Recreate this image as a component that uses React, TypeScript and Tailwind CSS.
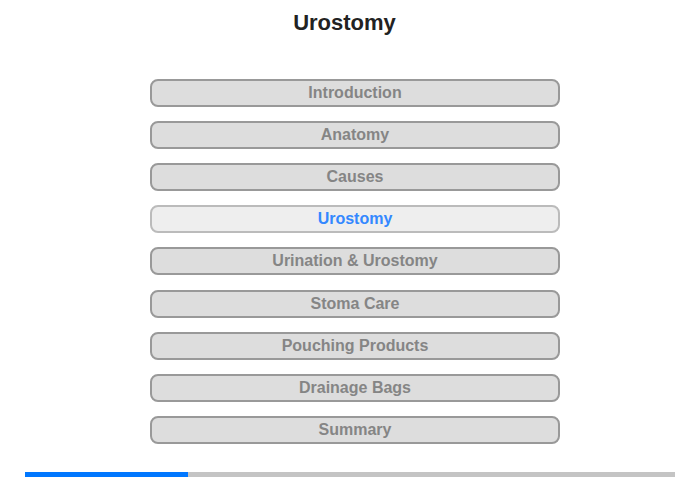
const items = [
  'Introduction',
  'Anatomy',
  'Causes',
  'Urostomy',
  'Urination & Urostomy',
  'Stoma Care',
  'Pouching Products',
  'Drainage Bags',
  'Summary',
]

export default function App() {
  const current = 3
  return (
    <div className="flex h-[480px] w-[700px] flex-col items-center bg-white font-['Liberation_Sans',Arial,sans-serif]">
      <h1 className="mt-[10px] mr-[11px] h-[26px] text-[22px] font-bold leading-[26px] text-[#222]">Urostomy</h1>
      <div className="mt-[43px] ml-[10px] flex w-[410px] flex-col gap-[14px]">
        {items.map((item, i) => (
          <button
            key={item}
            className={
              (i === 5 ? 'mt-[1px] ' : '') +
              (i === current
                ? 'h-[28px] w-full rounded-[8px] border-2 border-[#bbb] bg-[#eee] text-[16px] font-bold leading-[24px] text-[#3388ff]'
                : 'h-[28px] w-full rounded-[8px] border-2 border-[#999] bg-[#ddd] text-[16px] font-bold leading-[24px] text-[#858585]')
            }
          >
            {item}
          </button>
        ))}
      </div>
      <div className="mt-[28px] flex h-[5px] w-[650px] bg-[#c4c4c4]">
        <div className="h-full w-[163px] bg-[#0077ff]" />
      </div>
    </div>
  )
}
